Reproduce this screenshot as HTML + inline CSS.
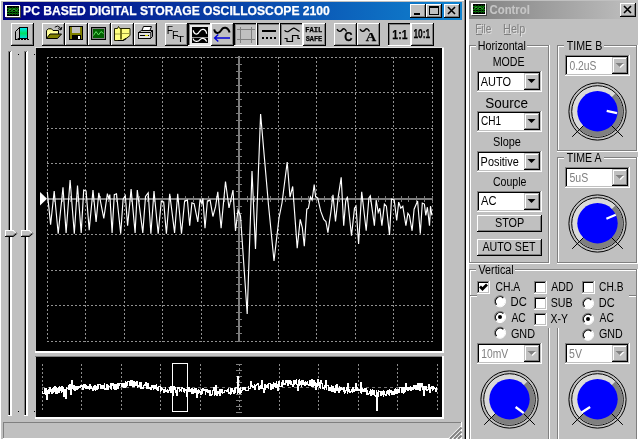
<!DOCTYPE html><html><head><meta charset="utf-8"><title>PC BASED DIGITAL STORAGE OSCILLOSCOPE 2100</title><style>html,body{margin:0;padding:0;background:#fff;overflow:hidden}body{width:638px;height:439px}svg rect{shape-rendering:crispEdges}</style></head><body><svg width="638" height="439" viewBox="0 0 638 439" style="display:block;will-change:transform" shape-rendering="auto"><rect x="0" y="0" width="638" height="439" fill="#fff" />
<rect x="0" y="0" width="466" height="439" fill="#c0c0c0" />
<rect x="0" y="0" width="1" height="439" fill="#fff" />
<rect x="0" y="0" width="466" height="1" fill="#fff" />
<rect x="464" y="0" width="1" height="439" fill="#808080" />
<rect x="465" y="0" width="1" height="439" fill="#000" />
<defs><linearGradient id="gA" x1="0" x2="1" y1="0" y2="0"><stop offset="0" stop-color="#000080"/><stop offset="1" stop-color="#1084d0"/></linearGradient><linearGradient id="gI" x1="0" x2="1" y1="0" y2="0"><stop offset="0" stop-color="#808080"/><stop offset="1" stop-color="#c0c0c0"/></linearGradient></defs>
<rect x="3" y="2" width="459" height="18" fill="url(#gA)" />
<rect x="5" y="5" width="15" height="12" fill="#fff" />
<rect x="6" y="17" width="15" height="1" fill="#404040" />
<rect x="20" y="6" width="1" height="12" fill="#404040" />
<rect x="7" y="6" width="12" height="10" fill="#000" />
<rect x="7" y="8" width="12" height="1" fill="#087808" />
<rect x="7" y="11" width="12" height="1" fill="#087808" />
<rect x="7" y="13" width="12" height="1" fill="#087808" />
<rect x="9" y="7" width="1" height="8" fill="#065006" />
<rect x="12" y="7" width="1" height="8" fill="#065006" />
<rect x="15" y="7" width="1" height="8" fill="#065006" />
<rect x="17" y="7" width="1" height="8" fill="#065006" />
<polyline points="8,10.5 10,9 12,10.5 14,9 16,10.5 18,9.5" fill="none" stroke="#30b030" stroke-width="1"/>
<text x="23.09" y="15.0" font-family="'Liberation Sans', sans-serif" font-size="12.5" font-weight="bold" fill="#fff" textLength="306.80" lengthAdjust="spacingAndGlyphs"  stroke="#fff" stroke-width="0.25">PC BASED DIGITAL STORAGE OSCILLOSCOPE 2100</text>
<rect x="410" y="4" width="16" height="14" fill="#c0c0c0" />
<rect x="410" y="4" width="16" height="1" fill="#fff" />
<rect x="410" y="4" width="1" height="14" fill="#fff" />
<rect x="410" y="17" width="16" height="1" fill="#000" />
<rect x="425" y="4" width="1" height="14" fill="#000" />
<rect x="411" y="16" width="14" height="1" fill="#808080" />
<rect x="424" y="5" width="1" height="12" fill="#808080" />
<rect x="414" y="13" width="6" height="2" fill="#000" />
<rect x="426" y="4" width="16" height="14" fill="#c0c0c0" />
<rect x="426" y="4" width="16" height="1" fill="#fff" />
<rect x="426" y="4" width="1" height="14" fill="#fff" />
<rect x="426" y="17" width="16" height="1" fill="#000" />
<rect x="441" y="4" width="1" height="14" fill="#000" />
<rect x="427" y="16" width="14" height="1" fill="#808080" />
<rect x="440" y="5" width="1" height="12" fill="#808080" />
<rect x="429.5" y="6.5" width="9" height="8" fill="none" stroke="#000" stroke-width="1"/>
<rect x="429" y="7" width="10" height="1" fill="#000" />
<rect x="444" y="4" width="16" height="14" fill="#c0c0c0" />
<rect x="444" y="4" width="16" height="1" fill="#fff" />
<rect x="444" y="4" width="1" height="14" fill="#fff" />
<rect x="444" y="17" width="16" height="1" fill="#000" />
<rect x="459" y="4" width="1" height="14" fill="#000" />
<rect x="445" y="16" width="14" height="1" fill="#808080" />
<rect x="458" y="5" width="1" height="12" fill="#808080" />
<path d="M448,7 L455,14 M455,7 L448,14" stroke="#000" stroke-width="1.6" fill="none"/>
<rect x="11" y="23" width="23" height="23" fill="#c0c0c0" />
<rect x="11" y="23" width="23" height="1" fill="#fff" />
<rect x="11" y="23" width="1" height="23" fill="#fff" />
<rect x="11" y="45" width="23" height="1" fill="#000" />
<rect x="33" y="23" width="1" height="23" fill="#000" />
<rect x="12" y="44" width="21" height="1" fill="#808080" />
<rect x="32" y="24" width="1" height="21" fill="#808080" />
<rect x="42" y="23" width="23" height="23" fill="#c0c0c0" />
<rect x="42" y="23" width="23" height="1" fill="#fff" />
<rect x="42" y="23" width="1" height="23" fill="#fff" />
<rect x="42" y="45" width="23" height="1" fill="#000" />
<rect x="64" y="23" width="1" height="23" fill="#000" />
<rect x="43" y="44" width="21" height="1" fill="#808080" />
<rect x="63" y="24" width="1" height="21" fill="#808080" />
<rect x="65" y="23" width="23" height="23" fill="#c0c0c0" />
<rect x="65" y="23" width="23" height="1" fill="#fff" />
<rect x="65" y="23" width="1" height="23" fill="#fff" />
<rect x="65" y="45" width="23" height="1" fill="#000" />
<rect x="87" y="23" width="1" height="23" fill="#000" />
<rect x="66" y="44" width="21" height="1" fill="#808080" />
<rect x="86" y="24" width="1" height="21" fill="#808080" />
<rect x="88" y="23" width="23" height="23" fill="#c0c0c0" />
<rect x="88" y="23" width="23" height="1" fill="#fff" />
<rect x="88" y="23" width="1" height="23" fill="#fff" />
<rect x="88" y="45" width="23" height="1" fill="#000" />
<rect x="110" y="23" width="1" height="23" fill="#000" />
<rect x="89" y="44" width="21" height="1" fill="#808080" />
<rect x="109" y="24" width="1" height="21" fill="#808080" />
<rect x="111" y="23" width="23" height="23" fill="#c0c0c0" />
<rect x="111" y="23" width="23" height="1" fill="#fff" />
<rect x="111" y="23" width="1" height="23" fill="#fff" />
<rect x="111" y="45" width="23" height="1" fill="#000" />
<rect x="133" y="23" width="1" height="23" fill="#000" />
<rect x="112" y="44" width="21" height="1" fill="#808080" />
<rect x="132" y="24" width="1" height="21" fill="#808080" />
<rect x="134" y="23" width="23" height="23" fill="#c0c0c0" />
<rect x="134" y="23" width="23" height="1" fill="#fff" />
<rect x="134" y="23" width="1" height="23" fill="#fff" />
<rect x="134" y="45" width="23" height="1" fill="#000" />
<rect x="156" y="23" width="1" height="23" fill="#000" />
<rect x="135" y="44" width="21" height="1" fill="#808080" />
<rect x="155" y="24" width="1" height="21" fill="#808080" />
<rect x="165" y="23" width="23" height="23" fill="#c0c0c0" />
<rect x="165" y="23" width="23" height="1" fill="#fff" />
<rect x="165" y="23" width="1" height="23" fill="#fff" />
<rect x="165" y="45" width="23" height="1" fill="#000" />
<rect x="187" y="23" width="1" height="23" fill="#000" />
<rect x="166" y="44" width="21" height="1" fill="#808080" />
<rect x="186" y="24" width="1" height="21" fill="#808080" />
<rect x="211" y="23" width="23" height="23" fill="#c0c0c0" />
<rect x="211" y="23" width="23" height="1" fill="#fff" />
<rect x="211" y="23" width="1" height="23" fill="#fff" />
<rect x="211" y="45" width="23" height="1" fill="#000" />
<rect x="233" y="23" width="1" height="23" fill="#000" />
<rect x="212" y="44" width="21" height="1" fill="#808080" />
<rect x="232" y="24" width="1" height="21" fill="#808080" />
<rect x="303" y="23" width="23" height="23" fill="#c0c0c0" />
<rect x="303" y="23" width="23" height="1" fill="#fff" />
<rect x="303" y="23" width="1" height="23" fill="#fff" />
<rect x="303" y="45" width="23" height="1" fill="#000" />
<rect x="325" y="23" width="1" height="23" fill="#000" />
<rect x="304" y="44" width="21" height="1" fill="#808080" />
<rect x="324" y="24" width="1" height="21" fill="#808080" />
<rect x="334" y="23" width="23" height="23" fill="#c0c0c0" />
<rect x="334" y="23" width="23" height="1" fill="#fff" />
<rect x="334" y="23" width="1" height="23" fill="#fff" />
<rect x="334" y="45" width="23" height="1" fill="#000" />
<rect x="356" y="23" width="1" height="23" fill="#000" />
<rect x="335" y="44" width="21" height="1" fill="#808080" />
<rect x="355" y="24" width="1" height="21" fill="#808080" />
<rect x="357" y="23" width="23" height="23" fill="#c0c0c0" />
<rect x="357" y="23" width="23" height="1" fill="#fff" />
<rect x="357" y="23" width="1" height="23" fill="#fff" />
<rect x="357" y="45" width="23" height="1" fill="#000" />
<rect x="379" y="23" width="1" height="23" fill="#000" />
<rect x="358" y="44" width="21" height="1" fill="#808080" />
<rect x="378" y="24" width="1" height="21" fill="#808080" />
<rect x="411" y="23" width="23" height="23" fill="#c0c0c0" />
<rect x="411" y="23" width="23" height="1" fill="#fff" />
<rect x="411" y="23" width="1" height="23" fill="#fff" />
<rect x="411" y="45" width="23" height="1" fill="#000" />
<rect x="433" y="23" width="1" height="23" fill="#000" />
<rect x="412" y="44" width="21" height="1" fill="#808080" />
<rect x="432" y="24" width="1" height="21" fill="#808080" />
<rect x="234" y="23" width="23" height="23" fill="#c0c0c0" />
<rect x="234" y="23" width="23" height="1" fill="#000" />
<rect x="234" y="23" width="1" height="23" fill="#000" />
<rect x="235" y="24" width="21" height="1" fill="#808080" />
<rect x="235" y="24" width="1" height="21" fill="#808080" />
<rect x="234" y="45" width="23" height="1" fill="#fff" />
<rect x="256" y="23" width="1" height="23" fill="#fff" />
<rect x="257" y="23" width="23" height="23" fill="#c0c0c0" />
<rect x="257" y="23" width="23" height="1" fill="#000" />
<rect x="257" y="23" width="1" height="23" fill="#000" />
<rect x="258" y="24" width="21" height="1" fill="#808080" />
<rect x="258" y="24" width="1" height="21" fill="#808080" />
<rect x="257" y="45" width="23" height="1" fill="#fff" />
<rect x="279" y="23" width="1" height="23" fill="#fff" />
<rect x="280" y="23" width="23" height="23" fill="#c0c0c0" />
<rect x="280" y="23" width="23" height="1" fill="#000" />
<rect x="280" y="23" width="1" height="23" fill="#000" />
<rect x="281" y="24" width="21" height="1" fill="#808080" />
<rect x="281" y="24" width="1" height="21" fill="#808080" />
<rect x="280" y="45" width="23" height="1" fill="#fff" />
<rect x="302" y="23" width="1" height="23" fill="#fff" />
<rect x="388" y="23" width="23" height="23" fill="#c0c0c0" />
<rect x="388" y="23" width="23" height="1" fill="#000" />
<rect x="388" y="23" width="1" height="23" fill="#000" />
<rect x="389" y="24" width="21" height="1" fill="#808080" />
<rect x="389" y="24" width="1" height="21" fill="#808080" />
<rect x="388" y="45" width="23" height="1" fill="#fff" />
<rect x="410" y="23" width="1" height="23" fill="#fff" />
<rect x="188" y="23" width="23" height="23" fill="#e9e9e9" />
<rect x="188" y="23" width="23" height="1" fill="#000" />
<rect x="188" y="23" width="1" height="23" fill="#000" />
<rect x="189" y="24" width="21" height="1" fill="#808080" />
<rect x="189" y="24" width="1" height="21" fill="#808080" />
<rect x="188" y="45" width="23" height="1" fill="#fff" />
<rect x="210" y="23" width="1" height="23" fill="#fff" />
<defs><linearGradient id="gD" x1="0" x2="0" y1="0" y2="1"><stop offset="0" stop-color="#00e8ff"/><stop offset=".55" stop-color="#00e060"/><stop offset="1" stop-color="#00d8d8"/></linearGradient></defs>
<rect x="19.5" y="27.5" width="8" height="10.5" fill="url(#gD)" stroke="#000" stroke-width="1"/>
<path d="M19.5,27.5 L15.5,31.5 L15.5,39.5" fill="none" stroke="#000" stroke-width="1"/>
<path d="M15,39.5 L30,39.5" fill="none" stroke="#000" stroke-width="1" stroke-dasharray="2,1"/>
<path d="M19.5,38 L17,39.5" fill="none" stroke="#000" stroke-width="1"/>
<path d="M46.5,38.5 L46.5,30.5 L48.5,28.8 L51.5,28.8 L53,30.5 L58.5,30.5 L58.5,34" fill="#ffff99" stroke="#000" stroke-width="1"/>
<path d="M46.5,38.5 L50,34 L61.5,34 L57.5,38.5 Z" fill="#808000" stroke="#000" stroke-width="1"/>
<path d="M54.8,27.2 Q57.5,24.8 60,27.5 L60.8,29.5" fill="none" stroke="#000" stroke-width="1"/>
<path d="M58.2,28.6 L61,30 L61.8,27" fill="none" stroke="#000" stroke-width="1"/>
<rect x="69.5" y="26.5" width="13" height="13" fill="#808000" stroke="#000" stroke-width="1"/>
<rect x="72" y="27" width="8" height="6" fill="#c0c0c0" />
<rect x="72" y="35" width="9" height="4" fill="#000" />
<rect x="78" y="36" width="2" height="3" fill="#fff" />
<rect x="91.5" y="27.5" width="14" height="12" fill="#808080" stroke="#000" stroke-width="1"/>
<rect x="93" y="29" width="11" height="9" fill="#006000" />
<polyline points="93.5,35.5 96,31.5 98.5,35 101,31.5 103.5,33.5" fill="none" stroke="#60e060" stroke-width="1"/>
<path d="M114.5,28.5 L117.5,28.5 L118.5,26.5 L119.8,28.5 L130,28.5 L130,35.5 L125.5,39 L123,40.5 L114.5,40.5 Z" fill="#ffff80" stroke="#202000" stroke-width="1"/>
<path d="M121,29 L121,39.5" fill="none" stroke="#505000" stroke-width="1.6"/>
<path d="M122,33.5 L129.5,33.5 M115,34 L120,34" fill="none" stroke="#a0a040" stroke-width="1"/>
<path d="M118,40.5 L123,40.5 L126,38.6" fill="none" stroke="#000" stroke-width="1.2"/>
<path d="M141.5,31.5 L143.5,26.5 L151.5,26.5 L149.5,31.5 Z" fill="#fff" stroke="#000" stroke-width="1"/>
<path d="M138.5,32.5 L141.5,30.5 L152.5,30.5 L150.5,32.5 Z" fill="#c0c0c0" stroke="#000" stroke-width="1"/>
<rect x="138.5" y="32.5" width="12" height="6" fill="#e0e0e0" stroke="#000" stroke-width="1"/>
<path d="M150.5,32.5 L152.5,30.5 L152.5,36.5 L150.5,38.5" fill="#909090" stroke="#000" stroke-width="1"/>
<rect x="140" y="35" width="9" height="1" fill="#000" />
<rect x="145" y="35" width="3" height="1" fill="#e0e000" />
<text x="166.86" y="33.7" font-family="'Liberation Sans', sans-serif" font-size="10.5" font-weight="normal" fill="#000" textLength="6.25" lengthAdjust="spacingAndGlyphs" >F</text>
<text x="171.93" y="38.8" font-family="'Liberation Sans', sans-serif" font-size="10.5" font-weight="normal" fill="#000" textLength="6.50" lengthAdjust="spacingAndGlyphs" >F</text>
<text x="177.04" y="42.0" font-family="'Liberation Sans', sans-serif" font-size="9.5" font-weight="normal" fill="#000" textLength="7.02" lengthAdjust="spacingAndGlyphs" >T</text>
<rect x="192" y="27" width="16" height="16" fill="#000" />
<rect x="192" y="37" width="16" height="1" fill="#909090" />
<path d="M193.3,30.3 C193.5,34.2 197.5,35.8 199.5,31.6 C201.3,28.2 206,28.4 206.6,33.8" fill="none" stroke="#fff" stroke-width="1.25"/>
<path d="M193,38.6 C194,42 198,42.3 200,39.6 C201.5,37.6 205,37.6 206.7,41.5" fill="none" stroke="#fff" stroke-width="1.25"/>
<path d="M214.2,29.3 C215,34 219,34 221,30.5 C223,26.5 228,26.5 229.6,32.5" fill="none" stroke="#000" stroke-width="2"/>
<path d="M214.8,38 L230,38 M218.3,34.6 L214.6,38 L218.3,41.4" fill="none" stroke="#0000d8" stroke-width="1.4"/>
<rect x="240" y="27" width="1" height="16" fill="#808080" />
<rect x="251" y="27" width="1" height="16" fill="#808080" />
<rect x="237" y="29" width="18" height="1" fill="#808080" />
<rect x="237" y="39" width="18" height="1" fill="#808080" />
<rect x="262" y="30" width="14" height="2" fill="#000" />
<rect x="262" y="37" width="2" height="2" fill="#000" />
<rect x="266" y="37" width="2" height="2" fill="#000" />
<rect x="270" y="37" width="2" height="2" fill="#000" />
<rect x="274" y="37" width="2" height="2" fill="#000" />
<path d="M284.5,30.4 Q286.8,32.6 288.8,31.2 L292.3,28.7 Q293.9,27.7 295.4,28.8 L299.6,31.6" fill="none" stroke="#000" stroke-width="1.2"/>
<path d="M284.5,38.5 L287,38.5 L287,41.5 L292.5,41.5 L292.5,35.5 L298,35.5 L298,38.5 L300,38.5" fill="none" stroke="#000" stroke-width="1.2"/>
<text x="305.22" y="32.2" font-family="'Liberation Mono', monospace" font-size="7.5" font-weight="bold" fill="#000" textLength="17.16" lengthAdjust="spacingAndGlyphs"  stroke="#000" stroke-width="0.25">FAIL</text>
<text x="305.67" y="41.0" font-family="'Liberation Mono', monospace" font-size="7.5" font-weight="bold" fill="#000" textLength="16.61" lengthAdjust="spacingAndGlyphs"  stroke="#000" stroke-width="0.25">SAFE</text>
<path d="M337,29.2 C338.5,32 340.5,32 342,30 C343.5,28 345,28.5 346.5,31.5" fill="none" stroke="#000" stroke-width="1.4"/>
<text x="344.23" y="41.3" font-family="'Liberation Sans', sans-serif" font-size="12.5" font-weight="bold" fill="#000" textLength="8.28" lengthAdjust="spacingAndGlyphs"  stroke="#000" stroke-width="0.25">C</text>
<path d="M360,29.2 C361.5,32 363.5,32 365,30 C366.5,28 368,28.5 369.5,31.5" fill="none" stroke="#000" stroke-width="1.4"/>
<text x="365.86" y="40.5" font-family="'Liberation Serif', serif" font-size="13.5" font-weight="bold" fill="#000" textLength="10.45" lengthAdjust="spacingAndGlyphs"  stroke="#000" stroke-width="0.25">A</text>
<text x="392.34" y="39.3" font-family="'Liberation Sans', sans-serif" font-size="13" font-weight="bold" fill="#000" textLength="15.15" lengthAdjust="spacingAndGlyphs"  stroke="#000" stroke-width="0.25">1:1</text>
<text x="413.47" y="38.4" font-family="'Liberation Sans', sans-serif" font-size="13" font-weight="bold" fill="#000" textLength="16.76" lengthAdjust="spacingAndGlyphs"  stroke="#000" stroke-width="0.25">10:1</text>
<rect x="8" y="51" width="1" height="364" fill="#808080" />
<rect x="9" y="51" width="1" height="364" fill="#000" />
<rect x="10" y="51" width="1" height="365" fill="#fff" />
<rect x="11" y="51" width="1" height="365" fill="#fff" />
<rect x="8" y="415" width="4" height="1" fill="#fff" />
<rect x="8" y="51" width="3" height="1" fill="#808080" />
<rect x="24" y="51" width="1" height="364" fill="#808080" />
<rect x="25" y="51" width="1" height="364" fill="#000" />
<rect x="26" y="51" width="1" height="365" fill="#fff" />
<rect x="27" y="51" width="1" height="365" fill="#fff" />
<rect x="24" y="415" width="4" height="1" fill="#fff" />
<rect x="24" y="51" width="3" height="1" fill="#808080" />
<rect x="18" y="54" width="1" height="1" fill="#000" />
<rect x="34" y="54" width="1" height="1" fill="#000" />
<rect x="18" y="411" width="1" height="1" fill="#000" />
<rect x="34" y="411" width="1" height="1" fill="#000" />
<path d="M5,230 L13,230 L17,233.5 L13,237 L5,237 Z" fill="#c0c0c0"/>
<rect x="5" y="230" width="9" height="1" fill="#fff" />
<rect x="5" y="230" width="1" height="7" fill="#fff" />
<path d="M5,236.5 L13,236.5 L17,233" fill="none" stroke="#000" stroke-width="1.2"/>
<path d="M13,230.5 L16.5,233.5" fill="none" stroke="#fff" stroke-width="1"/>
<path d="M6,235.5 L13,235.5 L15.5,233.3" fill="none" stroke="#808080" stroke-width="1"/>
<path d="M21,230 L29,230 L33,233.5 L29,237 L21,237 Z" fill="#c0c0c0"/>
<rect x="21" y="230" width="9" height="1" fill="#fff" />
<rect x="21" y="230" width="1" height="7" fill="#fff" />
<path d="M21,236.5 L29,236.5 L33,233" fill="none" stroke="#000" stroke-width="1.2"/>
<path d="M29,230.5 L32.5,233.5" fill="none" stroke="#fff" stroke-width="1"/>
<path d="M22,235.5 L29,235.5 L31.5,233.3" fill="none" stroke="#808080" stroke-width="1"/>
<rect x="36" y="48" width="406" height="303" fill="#000" />
<rect x="35" y="351" width="409" height="1" fill="#fff" />
<rect x="35" y="352" width="409" height="1" fill="#fff" />
<rect x="442" y="47" width="1" height="306" fill="#fff" />
<rect x="443" y="47" width="1" height="306" fill="#fff" />
<rect x="35" y="47" width="409" height="1" fill="#e0e0e0" />
<line x1="47.5" y1="57" x2="47.5" y2="342" stroke="#909090" stroke-width="1" stroke-dasharray="2,2" shape-rendering="crispEdges"/>
<line x1="85.5" y1="57" x2="85.5" y2="342" stroke="#909090" stroke-width="1" stroke-dasharray="2,2" shape-rendering="crispEdges"/>
<line x1="124.5" y1="57" x2="124.5" y2="342" stroke="#909090" stroke-width="1" stroke-dasharray="2,2" shape-rendering="crispEdges"/>
<line x1="162.5" y1="57" x2="162.5" y2="342" stroke="#909090" stroke-width="1" stroke-dasharray="2,2" shape-rendering="crispEdges"/>
<line x1="201.5" y1="57" x2="201.5" y2="342" stroke="#909090" stroke-width="1" stroke-dasharray="2,2" shape-rendering="crispEdges"/>
<line x1="278.5" y1="57" x2="278.5" y2="342" stroke="#909090" stroke-width="1" stroke-dasharray="2,2" shape-rendering="crispEdges"/>
<line x1="316.5" y1="57" x2="316.5" y2="342" stroke="#909090" stroke-width="1" stroke-dasharray="2,2" shape-rendering="crispEdges"/>
<line x1="355.5" y1="57" x2="355.5" y2="342" stroke="#909090" stroke-width="1" stroke-dasharray="2,2" shape-rendering="crispEdges"/>
<line x1="393.5" y1="57" x2="393.5" y2="342" stroke="#909090" stroke-width="1" stroke-dasharray="2,2" shape-rendering="crispEdges"/>
<line x1="432.5" y1="57" x2="432.5" y2="342" stroke="#909090" stroke-width="1" stroke-dasharray="2,2" shape-rendering="crispEdges"/>
<line x1="47" y1="57.5" x2="433" y2="57.5" stroke="#909090" stroke-width="1" stroke-dasharray="2,2" shape-rendering="crispEdges"/>
<line x1="47" y1="92.5" x2="433" y2="92.5" stroke="#909090" stroke-width="1" stroke-dasharray="2,2" shape-rendering="crispEdges"/>
<line x1="47" y1="128.5" x2="433" y2="128.5" stroke="#909090" stroke-width="1" stroke-dasharray="2,2" shape-rendering="crispEdges"/>
<line x1="47" y1="163.5" x2="433" y2="163.5" stroke="#909090" stroke-width="1" stroke-dasharray="2,2" shape-rendering="crispEdges"/>
<line x1="47" y1="234.5" x2="433" y2="234.5" stroke="#909090" stroke-width="1" stroke-dasharray="2,2" shape-rendering="crispEdges"/>
<line x1="47" y1="270.5" x2="433" y2="270.5" stroke="#909090" stroke-width="1" stroke-dasharray="2,2" shape-rendering="crispEdges"/>
<line x1="47" y1="305.5" x2="433" y2="305.5" stroke="#909090" stroke-width="1" stroke-dasharray="2,2" shape-rendering="crispEdges"/>
<line x1="47" y1="341.5" x2="433" y2="341.5" stroke="#909090" stroke-width="1" stroke-dasharray="2,2" shape-rendering="crispEdges"/>
<rect x="238" y="56" width="2" height="286" fill="#7c7c7c" />
<rect x="47" y="198" width="386" height="2" fill="#7c7c7c" />
<rect x="236" y="57" width="6" height="1" fill="#7c7c7c" />
<rect x="236" y="64" width="6" height="1" fill="#7c7c7c" />
<rect x="236" y="71" width="6" height="1" fill="#7c7c7c" />
<rect x="236" y="78" width="6" height="1" fill="#7c7c7c" />
<rect x="236" y="85" width="6" height="1" fill="#7c7c7c" />
<rect x="236" y="92" width="6" height="1" fill="#7c7c7c" />
<rect x="236" y="99" width="6" height="1" fill="#7c7c7c" />
<rect x="236" y="106" width="6" height="1" fill="#7c7c7c" />
<rect x="236" y="113" width="6" height="1" fill="#7c7c7c" />
<rect x="236" y="120" width="6" height="1" fill="#7c7c7c" />
<rect x="236" y="128" width="6" height="1" fill="#7c7c7c" />
<rect x="236" y="135" width="6" height="1" fill="#7c7c7c" />
<rect x="236" y="142" width="6" height="1" fill="#7c7c7c" />
<rect x="236" y="149" width="6" height="1" fill="#7c7c7c" />
<rect x="236" y="156" width="6" height="1" fill="#7c7c7c" />
<rect x="236" y="163" width="6" height="1" fill="#7c7c7c" />
<rect x="236" y="170" width="6" height="1" fill="#7c7c7c" />
<rect x="236" y="177" width="6" height="1" fill="#7c7c7c" />
<rect x="236" y="184" width="6" height="1" fill="#7c7c7c" />
<rect x="236" y="191" width="6" height="1" fill="#7c7c7c" />
<rect x="236" y="199" width="6" height="1" fill="#7c7c7c" />
<rect x="236" y="206" width="6" height="1" fill="#7c7c7c" />
<rect x="236" y="213" width="6" height="1" fill="#7c7c7c" />
<rect x="236" y="220" width="6" height="1" fill="#7c7c7c" />
<rect x="236" y="227" width="6" height="1" fill="#7c7c7c" />
<rect x="236" y="234" width="6" height="1" fill="#7c7c7c" />
<rect x="236" y="241" width="6" height="1" fill="#7c7c7c" />
<rect x="236" y="248" width="6" height="1" fill="#7c7c7c" />
<rect x="236" y="255" width="6" height="1" fill="#7c7c7c" />
<rect x="236" y="262" width="6" height="1" fill="#7c7c7c" />
<rect x="236" y="270" width="6" height="1" fill="#7c7c7c" />
<rect x="236" y="277" width="6" height="1" fill="#7c7c7c" />
<rect x="236" y="284" width="6" height="1" fill="#7c7c7c" />
<rect x="236" y="291" width="6" height="1" fill="#7c7c7c" />
<rect x="236" y="298" width="6" height="1" fill="#7c7c7c" />
<rect x="236" y="305" width="6" height="1" fill="#7c7c7c" />
<rect x="236" y="312" width="6" height="1" fill="#7c7c7c" />
<rect x="236" y="319" width="6" height="1" fill="#7c7c7c" />
<rect x="236" y="326" width="6" height="1" fill="#7c7c7c" />
<rect x="236" y="333" width="6" height="1" fill="#7c7c7c" />
<rect x="236" y="341" width="6" height="1" fill="#7c7c7c" />
<rect x="47" y="196" width="1" height="6" fill="#7c7c7c" />
<rect x="54" y="196" width="1" height="6" fill="#7c7c7c" />
<rect x="62" y="196" width="1" height="6" fill="#7c7c7c" />
<rect x="70" y="196" width="1" height="6" fill="#7c7c7c" />
<rect x="77" y="196" width="1" height="6" fill="#7c7c7c" />
<rect x="85" y="196" width="1" height="6" fill="#7c7c7c" />
<rect x="93" y="196" width="1" height="6" fill="#7c7c7c" />
<rect x="100" y="196" width="1" height="6" fill="#7c7c7c" />
<rect x="108" y="196" width="1" height="6" fill="#7c7c7c" />
<rect x="116" y="196" width="1" height="6" fill="#7c7c7c" />
<rect x="124" y="196" width="1" height="6" fill="#7c7c7c" />
<rect x="131" y="196" width="1" height="6" fill="#7c7c7c" />
<rect x="139" y="196" width="1" height="6" fill="#7c7c7c" />
<rect x="147" y="196" width="1" height="6" fill="#7c7c7c" />
<rect x="154" y="196" width="1" height="6" fill="#7c7c7c" />
<rect x="162" y="196" width="1" height="6" fill="#7c7c7c" />
<rect x="170" y="196" width="1" height="6" fill="#7c7c7c" />
<rect x="177" y="196" width="1" height="6" fill="#7c7c7c" />
<rect x="185" y="196" width="1" height="6" fill="#7c7c7c" />
<rect x="193" y="196" width="1" height="6" fill="#7c7c7c" />
<rect x="201" y="196" width="1" height="6" fill="#7c7c7c" />
<rect x="208" y="196" width="1" height="6" fill="#7c7c7c" />
<rect x="216" y="196" width="1" height="6" fill="#7c7c7c" />
<rect x="224" y="196" width="1" height="6" fill="#7c7c7c" />
<rect x="231" y="196" width="1" height="6" fill="#7c7c7c" />
<rect x="239" y="196" width="1" height="6" fill="#7c7c7c" />
<rect x="247" y="196" width="1" height="6" fill="#7c7c7c" />
<rect x="254" y="196" width="1" height="6" fill="#7c7c7c" />
<rect x="262" y="196" width="1" height="6" fill="#7c7c7c" />
<rect x="270" y="196" width="1" height="6" fill="#7c7c7c" />
<rect x="278" y="196" width="1" height="6" fill="#7c7c7c" />
<rect x="285" y="196" width="1" height="6" fill="#7c7c7c" />
<rect x="293" y="196" width="1" height="6" fill="#7c7c7c" />
<rect x="301" y="196" width="1" height="6" fill="#7c7c7c" />
<rect x="308" y="196" width="1" height="6" fill="#7c7c7c" />
<rect x="316" y="196" width="1" height="6" fill="#7c7c7c" />
<rect x="324" y="196" width="1" height="6" fill="#7c7c7c" />
<rect x="331" y="196" width="1" height="6" fill="#7c7c7c" />
<rect x="339" y="196" width="1" height="6" fill="#7c7c7c" />
<rect x="347" y="196" width="1" height="6" fill="#7c7c7c" />
<rect x="355" y="196" width="1" height="6" fill="#7c7c7c" />
<rect x="362" y="196" width="1" height="6" fill="#7c7c7c" />
<rect x="370" y="196" width="1" height="6" fill="#7c7c7c" />
<rect x="378" y="196" width="1" height="6" fill="#7c7c7c" />
<rect x="385" y="196" width="1" height="6" fill="#7c7c7c" />
<rect x="393" y="196" width="1" height="6" fill="#7c7c7c" />
<rect x="401" y="196" width="1" height="6" fill="#7c7c7c" />
<rect x="408" y="196" width="1" height="6" fill="#7c7c7c" />
<rect x="416" y="196" width="1" height="6" fill="#7c7c7c" />
<rect x="424" y="196" width="1" height="6" fill="#7c7c7c" />
<rect x="432" y="196" width="1" height="6" fill="#7c7c7c" />
<polygon points="40,192 47,198.7 40,205.4" fill="#fff"/>
<polyline points="47.3,191.9 50.6,224.7 54.2,191.0 58.2,233.8 63.0,187.3 66.1,232.9 70.1,180.0 74.3,233.8 77.5,185.5 81.2,232.9 83.7,190.1 86.1,191.0 89.2,230.1 93.0,190.1 96.1,221.9 98.8,192.8 103.8,218.3 107.4,193.7 108.9,199.2 109.8,194.6 112.1,232.9 114.3,194.6 116.5,193.7 120.7,233.8 123.1,199.2 125.3,195.5 127.6,225.6 131.1,189.1 135.1,232.9 137.3,190.1 142.8,232.9 145.5,196.4 148.2,192.8 150.9,233.8 154.0,191.0 158.2,233.8 161.3,201.0 163.7,201.9 166.4,233.8 169.7,193.7 174.6,232.9 177.7,193.7 181.5,233.8 184.6,201.0 187.4,200.1 189.7,225.6 191.9,202.8 194.1,203.7 197.8,221.9 200.1,199.2 201.9,203.7 202.9,198.3 205.0,228.3 207.4,201.0 210.1,200.1 212.9,216.5 215.6,206.4 217.8,191.9 221.1,228.3 225.5,181.5 229.0,208.0 233.0,190.0 235.5,231.0 238.0,210.0 240.5,216.0 247.2,314.0 252.0,171.0 255.5,249.0 260.6,114.0 268.5,205.0 274.0,261.0 279.0,218.0 282.0,203.0 287.2,162.0 290.0,197.0 292.7,186.5 297.2,248.1 300.2,219.4 302.3,227.6 304.3,246.1 306.8,209.2 308.4,208.2 310.5,196.9 312.1,200.0 314.2,184.6 315.6,196.9 317.7,197.9 320.7,211.2 323.8,219.4 325.9,221.5 327.9,232.7 331.0,211.2 333.0,194.8 335.5,221.5 338.2,196.9 341.2,177.4 343.7,225.6 345.7,201.0 347.4,196.9 351.5,235.8 354.5,208.2 356.0,206.1 358.6,244.0 361.7,191.8 366.2,230.7 368.9,197.9 370.3,195.9 374.4,225.6 376.2,200.0 378.2,212.3 379.8,208.2 381.9,225.6 384.4,204.1 386.4,206.2 389.5,234.9 391.5,199.0 394.2,200.0 396.7,220.5 398.7,202.1 400.8,208.2 402.8,206.2 405.9,225.6 407.9,213.3 409.4,215.4 412.1,230.8 414.1,209.2 417.6,201.0 420.3,233.8 422.3,203.1 424.4,204.1 425.8,215.4 427.4,207.2 429.5,225.6 430.5,206.2 431.9,215.4" fill="none" stroke="#fff" stroke-width="1.15" stroke-linejoin="miter"/>
<rect x="36" y="357" width="406" height="60" fill="#000" />
<rect x="35" y="356" width="409" height="1" fill="#808080" />
<rect x="35" y="417" width="409" height="1" fill="#fff" />
<rect x="35" y="418" width="409" height="1" fill="#fff" />
<rect x="442" y="356" width="1" height="63" fill="#fff" />
<rect x="443" y="356" width="1" height="63" fill="#fff" />
<line x1="42.5" y1="364" x2="42.5" y2="412" stroke="#8c8c8c" stroke-width="1" stroke-dasharray="2,2" shape-rendering="crispEdges"/>
<line x1="81.5" y1="364" x2="81.5" y2="412" stroke="#8c8c8c" stroke-width="1" stroke-dasharray="2,2" shape-rendering="crispEdges"/>
<line x1="121.5" y1="364" x2="121.5" y2="412" stroke="#8c8c8c" stroke-width="1" stroke-dasharray="2,2" shape-rendering="crispEdges"/>
<line x1="160.5" y1="364" x2="160.5" y2="412" stroke="#8c8c8c" stroke-width="1" stroke-dasharray="2,2" shape-rendering="crispEdges"/>
<line x1="200.5" y1="364" x2="200.5" y2="412" stroke="#8c8c8c" stroke-width="1" stroke-dasharray="2,2" shape-rendering="crispEdges"/>
<line x1="239.5" y1="364" x2="239.5" y2="412" stroke="#8c8c8c" stroke-width="1" stroke-dasharray="2,2" shape-rendering="crispEdges"/>
<line x1="279.5" y1="364" x2="279.5" y2="412" stroke="#8c8c8c" stroke-width="1" stroke-dasharray="2,2" shape-rendering="crispEdges"/>
<line x1="318.5" y1="364" x2="318.5" y2="412" stroke="#8c8c8c" stroke-width="1" stroke-dasharray="2,2" shape-rendering="crispEdges"/>
<line x1="358.5" y1="364" x2="358.5" y2="412" stroke="#8c8c8c" stroke-width="1" stroke-dasharray="2,2" shape-rendering="crispEdges"/>
<line x1="397.5" y1="364" x2="397.5" y2="412" stroke="#8c8c8c" stroke-width="1" stroke-dasharray="2,2" shape-rendering="crispEdges"/>
<line x1="437.5" y1="364" x2="437.5" y2="412" stroke="#8c8c8c" stroke-width="1" stroke-dasharray="2,2" shape-rendering="crispEdges"/>
<rect x="236" y="364" width="6" height="1" fill="#808080" />
<rect x="236" y="370" width="6" height="1" fill="#808080" />
<rect x="236" y="376" width="6" height="1" fill="#808080" />
<rect x="236" y="382" width="6" height="1" fill="#808080" />
<rect x="236" y="388" width="6" height="1" fill="#808080" />
<rect x="236" y="394" width="6" height="1" fill="#808080" />
<rect x="236" y="400" width="6" height="1" fill="#808080" />
<rect x="236" y="406" width="6" height="1" fill="#808080" />
<rect x="236" y="412" width="6" height="1" fill="#808080" />
<line x1="42" y1="387.5" x2="437" y2="387.5" stroke="#707070" stroke-width="1" stroke-dasharray="3,3" shape-rendering="crispEdges"/>
<path d="M42,391h1v3h-1zM43,393h1v1h-1zM44,388h1v6h-1zM45,388h1v7h-1zM46,388h1v12h-1zM47,390h1v10h-1zM48,389h1v5h-1zM49,387h1v7h-1zM50,387h1v5h-1zM51,389h1v5h-1zM52,388h1v6h-1zM53,387h1v6h-1zM54,386h1v6h-1zM55,386h1v8h-1zM56,387h1v7h-1zM57,388h1v6h-1zM58,387h1v6h-1zM59,386h1v7h-1zM60,387h1v4h-1zM61,386h1v7h-1zM62,386h1v6h-1zM63,387h1v10h-1zM64,389h1v8h-1zM65,389h1v10h-1zM66,387h1v12h-1zM67,388h1v1h-1zM68,385h1v5h-1zM69,384h1v6h-1zM70,384h1v11h-1zM71,380h1v15h-1zM72,380h1v9h-1zM73,385h1v5h-1zM74,385h1v6h-1zM75,386h1v5h-1zM76,386h1v4h-1zM77,386h1v4h-1zM78,386h1v3h-1zM79,386h1v2h-1zM80,385h1v3h-1zM81,385h1v2h-1zM82,385h1v5h-1zM83,384h1v6h-1zM84,384h1v4h-1zM85,384h1v5h-1zM86,385h1v4h-1zM87,386h1v3h-1zM88,386h1v3h-1zM89,384h1v6h-1zM90,384h1v5h-1zM91,386h1v3h-1zM92,388h1v3h-1zM93,386h1v5h-1zM94,385h1v5h-1zM95,385h1v6h-1zM96,386h1v4h-1zM97,384h1v6h-1zM98,384h1v5h-1zM99,384h1v1h-1zM100,384h1v5h-1zM101,385h1v4h-1zM102,385h1v4h-1zM103,385h1v4h-1zM104,383h1v7h-1zM105,388h1v2h-1zM106,384h1v6h-1zM107,384h1v6h-1zM108,385h1v5h-1zM109,386h1v1h-1zM110,383h1v6h-1zM111,383h1v7h-1zM112,383h1v3h-1zM113,383h1v6h-1zM114,384h1v6h-1zM115,384h1v6h-1zM116,384h1v6h-1zM117,383h1v6h-1zM118,383h1v6h-1zM119,383h1v3h-1zM120,383h1v1h-1zM121,383h1v4h-1zM122,383h1v4h-1zM123,383h1v5h-1zM124,383h1v5h-1zM125,381h1v7h-1zM126,382h1v5h-1zM127,381h1v5h-1zM128,381h1v1h-1zM129,381h1v5h-1zM130,380h1v6h-1zM131,380h1v6h-1zM132,380h1v7h-1zM133,381h1v6h-1zM134,381h1v6h-1zM135,382h1v4h-1zM136,381h1v5h-1zM137,381h1v7h-1zM138,385h1v2h-1zM139,382h1v5h-1zM140,382h1v7h-1zM141,382h1v7h-1zM142,387h1v2h-1zM143,385h1v4h-1zM144,384h1v2h-1zM145,382h1v4h-1zM146,382h1v7h-1zM147,383h1v6h-1zM148,383h1v6h-1zM149,387h1v2h-1zM150,387h1v3h-1zM151,385h1v5h-1zM152,385h1v3h-1zM153,385h1v5h-1zM154,385h1v4h-1zM155,385h1v4h-1zM156,384h1v6h-1zM157,387h1v4h-1zM158,386h1v5h-1zM159,386h1v1h-1zM160,386h1v6h-1zM161,387h1v4h-1zM162,388h1v2h-1zM163,389h1v4h-1zM164,389h1v4h-1zM165,387h1v5h-1zM166,390h1v2h-1zM167,389h1v4h-1zM168,390h1v3h-1zM169,387h1v4h-1zM170,386h1v7h-1zM171,386h1v7h-1zM172,388h1v8h-1zM173,386h1v10h-1zM174,386h1v4h-1zM175,387h1v6h-1zM176,390h1v6h-1zM177,387h1v9h-1zM178,387h1v2h-1zM179,387h1v5h-1zM180,389h1v2h-1zM181,387h1v5h-1zM182,387h1v2h-1zM183,388h1v4h-1zM184,388h1v5h-1zM185,389h1v2h-1zM186,389h1v8h-1zM187,391h1v6h-1zM188,387h1v5h-1zM189,387h1v5h-1zM190,389h1v3h-1zM191,388h1v6h-1zM192,388h1v6h-1zM193,389h1v5h-1zM194,388h1v5h-1zM195,388h1v5h-1zM196,388h1v10h-1zM197,390h1v8h-1zM198,389h1v5h-1zM199,390h1v3h-1zM200,391h1v4h-1zM201,389h1v6h-1zM202,388h1v6h-1zM203,388h1v3h-1zM204,389h1v2h-1zM205,389h1v6h-1zM206,389h1v3h-1zM207,389h1v4h-1zM208,390h1v3h-1zM209,390h1v6h-1zM210,390h1v6h-1zM211,394h1v2h-1zM212,390h1v5h-1zM213,387h1v4h-1zM214,387h1v9h-1zM215,385h1v10h-1zM216,385h1v11h-1zM217,391h1v5h-1zM218,391h1v3h-1zM219,389h1v7h-1zM220,389h1v7h-1zM221,389h1v4h-1zM222,389h1v5h-1zM223,392h1v1h-1zM224,390h1v3h-1zM225,390h1v1h-1zM226,390h1v2h-1zM227,389h1v3h-1zM228,388h1v6h-1zM229,392h1v2h-1zM230,388h1v7h-1zM231,388h1v6h-1zM232,388h1v4h-1zM233,390h1v4h-1zM234,388h1v6h-1zM235,387h1v6h-1zM236,387h1v1h-1zM237,376h1v18h-1zM238,376h1v17h-1zM239,388h1v6h-1zM240,387h1v7h-1zM241,390h1v3h-1zM242,387h1v4h-1zM243,387h1v3h-1zM244,387h1v3h-1zM245,387h1v4h-1zM246,390h1v1h-1zM247,390h1v1h-1zM248,386h1v5h-1zM249,388h1v1h-1zM250,381h1v8h-1zM251,381h1v6h-1zM252,385h1v3h-1zM253,386h1v2h-1zM254,384h1v6h-1zM255,385h1v5h-1zM256,384h1v2h-1zM257,383h1v2h-1zM258,383h1v7h-1zM259,386h1v4h-1zM260,385h1v4h-1zM261,380h1v9h-1zM262,380h1v9h-1zM263,388h1v5h-1zM264,384h1v9h-1zM265,384h1v6h-1zM266,385h1v3h-1zM267,384h1v4h-1zM268,383h1v6h-1zM269,383h1v1h-1zM270,383h1v7h-1zM271,384h1v6h-1zM272,384h1v5h-1zM273,382h1v7h-1zM274,383h1v4h-1zM275,383h1v5h-1zM276,381h1v7h-1zM277,384h1v7h-1zM278,381h1v10h-1zM279,381h1v6h-1zM280,386h1v1h-1zM281,382h1v5h-1zM282,380h1v7h-1zM283,380h1v5h-1zM284,383h1v2h-1zM285,380h1v5h-1zM286,380h1v3h-1zM287,380h1v6h-1zM288,380h1v6h-1zM289,380h1v4h-1zM290,380h1v5h-1zM291,381h1v4h-1zM292,384h1v3h-1zM293,380h1v7h-1zM294,380h1v5h-1zM295,380h1v4h-1zM296,379h1v6h-1zM297,384h1v7h-1zM298,380h1v11h-1zM299,379h1v7h-1zM300,381h1v4h-1zM301,380h1v7h-1zM302,380h1v5h-1zM303,380h1v5h-1zM304,382h1v4h-1zM305,381h1v5h-1zM306,382h1v3h-1zM307,381h1v4h-1zM308,384h1v2h-1zM309,380h1v6h-1zM310,380h1v6h-1zM311,379h1v8h-1zM312,379h1v8h-1zM313,380h1v7h-1zM314,380h1v6h-1zM315,382h1v8h-1zM316,383h1v7h-1zM317,379h1v8h-1zM318,379h1v7h-1zM319,382h1v6h-1zM320,380h1v9h-1zM321,380h1v4h-1zM322,383h1v6h-1zM323,387h1v2h-1zM324,385h1v5h-1zM325,380h1v8h-1zM326,380h1v10h-1zM327,385h1v1h-1zM328,385h1v6h-1zM329,387h1v4h-1zM330,387h1v4h-1zM331,385h1v7h-1zM332,386h1v6h-1zM333,386h1v6h-1zM334,388h1v5h-1zM335,385h1v8h-1zM336,384h1v7h-1zM337,384h1v7h-1zM338,388h1v5h-1zM339,386h1v7h-1zM340,387h1v4h-1zM341,387h1v3h-1zM342,388h1v2h-1zM343,387h1v5h-1zM344,387h1v7h-1zM345,390h1v3h-1zM346,387h1v4h-1zM347,383h1v11h-1zM348,383h1v9h-1zM349,389h1v4h-1zM350,391h1v2h-1zM351,389h1v3h-1zM352,387h1v6h-1zM353,387h1v5h-1zM354,389h1v3h-1zM355,383h1v8h-1zM356,383h1v8h-1zM357,387h1v4h-1zM358,389h1v2h-1zM359,389h1v2h-1zM360,382h1v11h-1zM361,382h1v12h-1zM362,388h1v4h-1zM363,389h1v3h-1zM364,388h1v4h-1zM365,388h1v4h-1zM366,388h1v7h-1zM367,390h1v5h-1zM368,393h1v2h-1zM369,391h1v3h-1zM370,389h1v7h-1zM371,390h1v6h-1zM372,389h1v6h-1zM373,390h1v5h-1zM374,390h1v6h-1zM375,395h1v2h-1zM376,390h1v21h-1zM377,392h1v19h-1zM378,390h1v7h-1zM379,391h1v1h-1zM380,391h1v5h-1zM381,391h1v5h-1zM382,391h1v4h-1zM383,390h1v7h-1zM384,391h1v4h-1zM385,394h1v2h-1zM386,391h1v5h-1zM387,390h1v4h-1zM388,390h1v5h-1zM389,389h1v7h-1zM390,390h1v3h-1zM391,390h1v5h-1zM392,391h1v4h-1zM393,391h1v4h-1zM394,389h1v6h-1zM395,388h1v6h-1zM396,389h1v5h-1zM397,389h1v5h-1zM398,389h1v4h-1zM399,387h1v6h-1zM400,387h1v1h-1zM401,387h1v6h-1zM402,387h1v6h-1zM403,387h1v7h-1zM404,387h1v6h-1zM405,383h1v9h-1zM406,383h1v7h-1zM407,387h1v4h-1zM408,387h1v4h-1zM409,387h1v3h-1zM410,386h1v5h-1zM411,387h1v4h-1zM412,387h1v3h-1zM413,385h1v5h-1zM414,385h1v4h-1zM415,385h1v5h-1zM416,385h1v5h-1zM417,383h1v7h-1zM418,383h1v7h-1zM419,383h1v8h-1zM420,383h1v8h-1zM421,383h1v4h-1zM422,383h1v7h-1zM423,386h1v10h-1zM424,386h1v10h-1zM425,386h1v4h-1zM426,386h1v5h-1zM427,389h1v2h-1zM428,384h1v6h-1zM429,384h1v9h-1zM430,387h1v6h-1zM431,386h1v3h-1zM432,386h1v5h-1zM433,386h1v4h-1zM434,387h1v2h-1zM435,388h1v4h-1zM436,387h1v5h-1z" fill="#fff" shape-rendering="crispEdges"/>
<rect x="172.5" y="363.5" width="15" height="48" fill="none" stroke="#fff" stroke-width="1"/>
<rect x="3" y="422" width="459" height="1" fill="#808080" />
<rect x="3" y="422" width="1" height="17" fill="#808080" />
<rect x="461" y="422" width="1" height="17" fill="#fff" />
<rect x="3" y="438" width="459" height="1" fill="#fff" />
<path d="M448.5,439 L461.5,426" stroke="#fff" stroke-width="1.3"/>
<path d="M450,439 L461.5,427.5" stroke="#808080" stroke-width="1.9"/>
<path d="M452.5,439 L461.5,430" stroke="#fff" stroke-width="1.3"/>
<path d="M454,439 L461.5,431.5" stroke="#808080" stroke-width="1.9"/>
<path d="M456.5,439 L461.5,434" stroke="#fff" stroke-width="1.3"/>
<path d="M458,439 L461.5,435.5" stroke="#808080" stroke-width="1.9"/>
<rect x="469" y="0" width="169" height="439" fill="#c0c0c0" />
<rect x="469" y="1" width="169" height="18" fill="url(#gI)" />
<rect x="471" y="3" width="15" height="12" fill="#fff" />
<rect x="472" y="15" width="15" height="1" fill="#404040" />
<rect x="486" y="4" width="1" height="12" fill="#404040" />
<rect x="473" y="4" width="12" height="10" fill="#000" />
<rect x="473" y="6" width="12" height="1" fill="#087808" />
<rect x="473" y="9" width="12" height="1" fill="#087808" />
<rect x="473" y="11" width="12" height="1" fill="#087808" />
<rect x="475" y="5" width="1" height="8" fill="#065006" />
<rect x="478" y="5" width="1" height="8" fill="#065006" />
<rect x="481" y="5" width="1" height="8" fill="#065006" />
<rect x="483" y="5" width="1" height="8" fill="#065006" />
<polyline points="474,8.5 476,7 478,8.5 480,7 482,8.5 484,7.5" fill="none" stroke="#30b030" stroke-width="1"/>
<text x="489.54" y="13.9" font-family="'Liberation Sans', sans-serif" font-size="12.3" font-weight="bold" fill="#c6c6c6" textLength="40.27" lengthAdjust="spacingAndGlyphs"  stroke="#c6c6c6" stroke-width="0.1">Control</text>
<rect x="620" y="3" width="16" height="14" fill="#c0c0c0" />
<rect x="620" y="3" width="16" height="1" fill="#fff" />
<rect x="620" y="3" width="1" height="14" fill="#fff" />
<rect x="620" y="16" width="16" height="1" fill="#000" />
<rect x="635" y="3" width="1" height="14" fill="#000" />
<rect x="621" y="15" width="14" height="1" fill="#808080" />
<rect x="634" y="4" width="1" height="12" fill="#808080" />
<path d="M624,6 L631,13 M631,6 L624,13" stroke="#000" stroke-width="1.6" fill="none"/>
<text x="476.17" y="33.7" font-family="'Liberation Sans', sans-serif" font-size="12" font-weight="normal" fill="#fff" textLength="16.28" lengthAdjust="spacingAndGlyphs" opacity="0.5">File</text>
<text x="475.17" y="32.7" font-family="'Liberation Sans', sans-serif" font-size="12" font-weight="normal" fill="#808080" textLength="16.28" lengthAdjust="spacingAndGlyphs" >File</text>
<text x="504.12" y="33.7" font-family="'Liberation Sans', sans-serif" font-size="12" font-weight="normal" fill="#fff" textLength="22.13" lengthAdjust="spacingAndGlyphs" opacity="0.5">Help</text>
<text x="503.12" y="32.7" font-family="'Liberation Sans', sans-serif" font-size="12" font-weight="normal" fill="#808080" textLength="22.13" lengthAdjust="spacingAndGlyphs" >Help</text>
<rect x="476" y="34" width="6" height="1" fill="#808080" />
<rect x="504" y="34" width="7" height="1" fill="#808080" />
<rect x="469" y="45" width="7" height="1" fill="#808080" />
<rect x="470" y="46" width="6" height="1" fill="#fff" />
<rect x="527" y="45" width="22" height="1" fill="#808080" />
<rect x="527" y="46" width="21" height="1" fill="#fff" />
<rect x="469" y="45" width="1" height="218" fill="#808080" />
<rect x="470" y="46" width="1" height="216" fill="#fff" />
<rect x="469" y="262" width="80" height="1" fill="#808080" />
<rect x="469" y="263" width="81" height="1" fill="#fff" />
<rect x="548" y="45" width="1" height="218" fill="#808080" />
<rect x="549" y="45" width="1" height="219" fill="#fff" />
<text x="477.82" y="49.7" font-family="'Liberation Sans', sans-serif" font-size="12.5" font-weight="normal" fill="#000" textLength="48.09" lengthAdjust="spacingAndGlyphs" >Horizontal</text>
<rect x="557" y="45" width="7" height="1" fill="#808080" />
<rect x="558" y="46" width="6" height="1" fill="#fff" />
<rect x="604" y="45" width="33" height="1" fill="#808080" />
<rect x="604" y="46" width="32" height="1" fill="#fff" />
<rect x="557" y="45" width="1" height="106" fill="#808080" />
<rect x="558" y="46" width="1" height="104" fill="#fff" />
<rect x="557" y="150" width="80" height="1" fill="#808080" />
<rect x="557" y="151" width="81" height="1" fill="#fff" />
<rect x="636" y="45" width="1" height="106" fill="#808080" />
<rect x="637" y="45" width="1" height="107" fill="#fff" />
<text x="566.76" y="49.7" font-family="'Liberation Sans', sans-serif" font-size="12.5" font-weight="normal" fill="#000" textLength="35.50" lengthAdjust="spacingAndGlyphs" >TIME B</text>
<rect x="557" y="157" width="7" height="1" fill="#808080" />
<rect x="558" y="158" width="6" height="1" fill="#fff" />
<rect x="604" y="157" width="33" height="1" fill="#808080" />
<rect x="604" y="158" width="32" height="1" fill="#fff" />
<rect x="557" y="157" width="1" height="106" fill="#808080" />
<rect x="558" y="158" width="1" height="104" fill="#fff" />
<rect x="557" y="262" width="80" height="1" fill="#808080" />
<rect x="557" y="263" width="81" height="1" fill="#fff" />
<rect x="636" y="157" width="1" height="106" fill="#808080" />
<rect x="637" y="157" width="1" height="107" fill="#fff" />
<text x="566.77" y="162.0" font-family="'Liberation Sans', sans-serif" font-size="12.5" font-weight="normal" fill="#000" textLength="34.75" lengthAdjust="spacingAndGlyphs" >TIME A</text>
<rect x="469" y="269" width="7" height="1" fill="#808080" />
<rect x="470" y="270" width="6" height="1" fill="#fff" />
<rect x="515" y="269" width="122" height="1" fill="#808080" />
<rect x="515" y="270" width="121" height="1" fill="#fff" />
<rect x="469" y="269" width="1" height="177" fill="#808080" />
<rect x="470" y="270" width="1" height="175" fill="#fff" />
<rect x="469" y="445" width="168" height="1" fill="#808080" />
<rect x="469" y="446" width="169" height="1" fill="#fff" />
<rect x="636" y="269" width="1" height="177" fill="#808080" />
<rect x="637" y="269" width="1" height="178" fill="#fff" />
<text x="478.55" y="274.0" font-family="'Liberation Sans', sans-serif" font-size="12.5" font-weight="normal" fill="#000" textLength="35.15" lengthAdjust="spacingAndGlyphs" >Vertical</text>
<text x="492.63" y="65.7" font-family="'Liberation Sans', sans-serif" font-size="12.5" font-weight="normal" fill="#000" textLength="31.83" lengthAdjust="spacingAndGlyphs" >MODE</text>
<rect x="477" y="71" width="65" height="21" fill="#fff" />
<rect x="477" y="71" width="65" height="1" fill="#808080" />
<rect x="477" y="71" width="1" height="21" fill="#808080" />
<rect x="478" y="72" width="63" height="1" fill="#000" />
<rect x="478" y="72" width="1" height="19" fill="#000" />
<rect x="477" y="91" width="65" height="1" fill="#fff" />
<rect x="541" y="71" width="1" height="21" fill="#fff" />
<rect x="478" y="90" width="63" height="1" fill="#c0c0c0" />
<rect x="540" y="72" width="1" height="19" fill="#c0c0c0" />
<rect x="524" y="73" width="16" height="17" fill="#c0c0c0" />
<rect x="524" y="73" width="16" height="1" fill="#c0c0c0" />
<rect x="524" y="73" width="1" height="17" fill="#c0c0c0" />
<rect x="525" y="74" width="14" height="1" fill="#fff" />
<rect x="525" y="74" width="1" height="15" fill="#fff" />
<rect x="524" y="89" width="16" height="1" fill="#000" />
<rect x="539" y="73" width="1" height="17" fill="#000" />
<rect x="525" y="88" width="14" height="1" fill="#808080" />
<rect x="538" y="74" width="1" height="15" fill="#808080" />
<polygon points="527.5,79 535.5,79 531.5,83" fill="#000"/>
<text x="480.78" y="85.8" font-family="'Liberation Sans', sans-serif" font-size="12.5" font-weight="normal" fill="#000" textLength="30.24" lengthAdjust="spacingAndGlyphs" >AUTO</text>
<text x="485.19" y="107.7" font-family="'Liberation Sans', sans-serif" font-size="14" font-weight="normal" fill="#000" textLength="42.81" lengthAdjust="spacingAndGlyphs" >Source</text>
<rect x="477" y="111" width="65" height="21" fill="#fff" />
<rect x="477" y="111" width="65" height="1" fill="#808080" />
<rect x="477" y="111" width="1" height="21" fill="#808080" />
<rect x="478" y="112" width="63" height="1" fill="#000" />
<rect x="478" y="112" width="1" height="19" fill="#000" />
<rect x="477" y="131" width="65" height="1" fill="#fff" />
<rect x="541" y="111" width="1" height="21" fill="#fff" />
<rect x="478" y="130" width="63" height="1" fill="#c0c0c0" />
<rect x="540" y="112" width="1" height="19" fill="#c0c0c0" />
<rect x="524" y="113" width="16" height="17" fill="#c0c0c0" />
<rect x="524" y="113" width="16" height="1" fill="#c0c0c0" />
<rect x="524" y="113" width="1" height="17" fill="#c0c0c0" />
<rect x="525" y="114" width="14" height="1" fill="#fff" />
<rect x="525" y="114" width="1" height="15" fill="#fff" />
<rect x="524" y="129" width="16" height="1" fill="#000" />
<rect x="539" y="113" width="1" height="17" fill="#000" />
<rect x="525" y="128" width="14" height="1" fill="#808080" />
<rect x="538" y="114" width="1" height="15" fill="#808080" />
<polygon points="527.5,119 535.5,119 531.5,123" fill="#000"/>
<text x="480.99" y="125.4" font-family="'Liberation Sans', sans-serif" font-size="12.5" font-weight="normal" fill="#000" textLength="20.10" lengthAdjust="spacingAndGlyphs" >CH1</text>
<text x="493.01" y="145.5" font-family="'Liberation Sans', sans-serif" font-size="12.5" font-weight="normal" fill="#000" textLength="27.88" lengthAdjust="spacingAndGlyphs" >Slope</text>
<rect x="477" y="151" width="65" height="21" fill="#fff" />
<rect x="477" y="151" width="65" height="1" fill="#808080" />
<rect x="477" y="151" width="1" height="21" fill="#808080" />
<rect x="478" y="152" width="63" height="1" fill="#000" />
<rect x="478" y="152" width="1" height="19" fill="#000" />
<rect x="477" y="171" width="65" height="1" fill="#fff" />
<rect x="541" y="151" width="1" height="21" fill="#fff" />
<rect x="478" y="170" width="63" height="1" fill="#c0c0c0" />
<rect x="540" y="152" width="1" height="19" fill="#c0c0c0" />
<rect x="524" y="153" width="16" height="17" fill="#c0c0c0" />
<rect x="524" y="153" width="16" height="1" fill="#c0c0c0" />
<rect x="524" y="153" width="1" height="17" fill="#c0c0c0" />
<rect x="525" y="154" width="14" height="1" fill="#fff" />
<rect x="525" y="154" width="1" height="15" fill="#fff" />
<rect x="524" y="169" width="16" height="1" fill="#000" />
<rect x="539" y="153" width="1" height="17" fill="#000" />
<rect x="525" y="168" width="14" height="1" fill="#808080" />
<rect x="538" y="154" width="1" height="15" fill="#808080" />
<polygon points="527.5,159 535.5,159 531.5,163" fill="#000"/>
<text x="480.61" y="165.8" font-family="'Liberation Sans', sans-serif" font-size="12.5" font-weight="normal" fill="#000" textLength="38.18" lengthAdjust="spacingAndGlyphs" >Positive</text>
<text x="492.96" y="185.7" font-family="'Liberation Sans', sans-serif" font-size="12.5" font-weight="normal" fill="#000" textLength="33.51" lengthAdjust="spacingAndGlyphs" >Couple</text>
<rect x="477" y="191" width="65" height="21" fill="#fff" />
<rect x="477" y="191" width="65" height="1" fill="#808080" />
<rect x="477" y="191" width="1" height="21" fill="#808080" />
<rect x="478" y="192" width="63" height="1" fill="#000" />
<rect x="478" y="192" width="1" height="19" fill="#000" />
<rect x="477" y="211" width="65" height="1" fill="#fff" />
<rect x="541" y="191" width="1" height="21" fill="#fff" />
<rect x="478" y="210" width="63" height="1" fill="#c0c0c0" />
<rect x="540" y="192" width="1" height="19" fill="#c0c0c0" />
<rect x="524" y="193" width="16" height="17" fill="#c0c0c0" />
<rect x="524" y="193" width="16" height="1" fill="#c0c0c0" />
<rect x="524" y="193" width="1" height="17" fill="#c0c0c0" />
<rect x="525" y="194" width="14" height="1" fill="#fff" />
<rect x="525" y="194" width="1" height="15" fill="#fff" />
<rect x="524" y="209" width="16" height="1" fill="#000" />
<rect x="539" y="193" width="1" height="17" fill="#000" />
<rect x="525" y="208" width="14" height="1" fill="#808080" />
<rect x="538" y="194" width="1" height="15" fill="#808080" />
<polygon points="527.5,199 535.5,199 531.5,203" fill="#000"/>
<text x="480.98" y="205.4" font-family="'Liberation Sans', sans-serif" font-size="12.5" font-weight="normal" fill="#000" textLength="15.45" lengthAdjust="spacingAndGlyphs" >AC</text>
<rect x="477" y="215" width="65" height="17" fill="#c0c0c0" />
<rect x="477" y="215" width="65" height="1" fill="#fff" />
<rect x="477" y="215" width="1" height="17" fill="#fff" />
<rect x="477" y="231" width="65" height="1" fill="#000" />
<rect x="541" y="215" width="1" height="17" fill="#000" />
<rect x="478" y="230" width="63" height="1" fill="#808080" />
<rect x="540" y="216" width="1" height="15" fill="#808080" />
<text x="494.91" y="226.7" font-family="'Liberation Sans', sans-serif" font-size="12.5" font-weight="normal" fill="#000" textLength="29.36" lengthAdjust="spacingAndGlyphs" >STOP</text>
<rect x="477" y="239" width="65" height="17" fill="#c0c0c0" />
<rect x="477" y="239" width="65" height="1" fill="#fff" />
<rect x="477" y="239" width="1" height="17" fill="#fff" />
<rect x="477" y="255" width="65" height="1" fill="#000" />
<rect x="541" y="239" width="1" height="17" fill="#000" />
<rect x="478" y="254" width="63" height="1" fill="#808080" />
<rect x="540" y="240" width="1" height="15" fill="#808080" />
<text x="482.48" y="250.8" font-family="'Liberation Sans', sans-serif" font-size="12.5" font-weight="normal" fill="#000" textLength="53.06" lengthAdjust="spacingAndGlyphs" >AUTO SET</text>
<rect x="565" y="55" width="65" height="21" fill="#fff" />
<rect x="565" y="55" width="65" height="1" fill="#808080" />
<rect x="565" y="55" width="1" height="21" fill="#808080" />
<rect x="566" y="56" width="63" height="1" fill="#000" />
<rect x="566" y="56" width="1" height="19" fill="#000" />
<rect x="565" y="75" width="65" height="1" fill="#fff" />
<rect x="629" y="55" width="1" height="21" fill="#fff" />
<rect x="566" y="74" width="63" height="1" fill="#c0c0c0" />
<rect x="628" y="56" width="1" height="19" fill="#c0c0c0" />
<rect x="612" y="57" width="16" height="17" fill="#c0c0c0" />
<rect x="612" y="57" width="16" height="1" fill="#c0c0c0" />
<rect x="612" y="57" width="1" height="17" fill="#c0c0c0" />
<rect x="613" y="58" width="14" height="1" fill="#fff" />
<rect x="613" y="58" width="1" height="15" fill="#fff" />
<rect x="612" y="73" width="16" height="1" fill="#000" />
<rect x="627" y="57" width="1" height="17" fill="#000" />
<rect x="613" y="72" width="14" height="1" fill="#808080" />
<rect x="626" y="58" width="1" height="15" fill="#808080" />
<polygon points="616.5,64 624.5,64 620.5,68" fill="#fff"/>
<polygon points="615.5,63 623.5,63 619.5,67" fill="#808080"/>
<text x="569.50" y="70.0" font-family="'Liberation Sans', sans-serif" font-size="12.5" font-weight="normal" fill="#808080" textLength="26.98" lengthAdjust="spacingAndGlyphs" >0.2uS</text>
<circle cx="597.5" cy="111.5" r="28.6" fill="#c0c0c0" stroke="#000" stroke-width="1"/>
<circle cx="597.5" cy="111.5" r="25.8" fill="#dadada" stroke="#000" stroke-width="1"/>
<path d="M615.39,93.61 A25.3,25.3 0 0 1 579.61,129.39 Z" fill="#808080"/>
<line x1="584.5" y1="124.5" x2="572.2" y2="136.8" stroke="#000" stroke-width="1"/>
<line x1="610.5" y1="124.5" x2="622.8" y2="136.8" stroke="#000" stroke-width="1"/>
<circle cx="597.5" cy="111.2" r="20.2" fill="#0000ff"/>
<line x1="606.7" y1="110.9" x2="617" y2="113.2" stroke="#fff" stroke-width="2.3"/>
<rect x="565" y="167" width="65" height="21" fill="#fff" />
<rect x="565" y="167" width="65" height="1" fill="#808080" />
<rect x="565" y="167" width="1" height="21" fill="#808080" />
<rect x="566" y="168" width="63" height="1" fill="#000" />
<rect x="566" y="168" width="1" height="19" fill="#000" />
<rect x="565" y="187" width="65" height="1" fill="#fff" />
<rect x="629" y="167" width="1" height="21" fill="#fff" />
<rect x="566" y="186" width="63" height="1" fill="#c0c0c0" />
<rect x="628" y="168" width="1" height="19" fill="#c0c0c0" />
<rect x="612" y="169" width="16" height="17" fill="#c0c0c0" />
<rect x="612" y="169" width="16" height="1" fill="#c0c0c0" />
<rect x="612" y="169" width="1" height="17" fill="#c0c0c0" />
<rect x="613" y="170" width="14" height="1" fill="#fff" />
<rect x="613" y="170" width="1" height="15" fill="#fff" />
<rect x="612" y="185" width="16" height="1" fill="#000" />
<rect x="627" y="169" width="1" height="17" fill="#000" />
<rect x="613" y="184" width="14" height="1" fill="#808080" />
<rect x="626" y="170" width="1" height="15" fill="#808080" />
<polygon points="616.5,176 624.5,176 620.5,180" fill="#fff"/>
<polygon points="615.5,175 623.5,175 619.5,179" fill="#808080"/>
<text x="569.48" y="182.0" font-family="'Liberation Sans', sans-serif" font-size="12.5" font-weight="normal" fill="#808080" textLength="18.70" lengthAdjust="spacingAndGlyphs" >5uS</text>
<circle cx="597.5" cy="223.5" r="28.6" fill="#c0c0c0" stroke="#000" stroke-width="1"/>
<circle cx="597.5" cy="223.5" r="25.8" fill="#dadada" stroke="#000" stroke-width="1"/>
<path d="M615.39,205.61 A25.3,25.3 0 0 1 579.61,241.39 Z" fill="#808080"/>
<line x1="584.5" y1="236.5" x2="572.2" y2="248.8" stroke="#000" stroke-width="1"/>
<line x1="610.5" y1="236.5" x2="622.8" y2="248.8" stroke="#000" stroke-width="1"/>
<circle cx="597.5" cy="223.2" r="20.2" fill="#0000ff"/>
<line x1="606.4" y1="218.8" x2="615.8" y2="214.8" stroke="#fff" stroke-width="2.3"/>
<rect x="469" y="295" width="8" height="1" fill="#808080" />
<rect x="470" y="296" width="7" height="1" fill="#fff" />
<rect x="548" y="328" width="1" height="111" fill="#808080" />
<rect x="549" y="328" width="1" height="111" fill="#fff" />
<rect x="557" y="328" width="1" height="111" fill="#808080" />
<rect x="558" y="328" width="1" height="111" fill="#fff" />
<rect x="629" y="295" width="8" height="1" fill="#808080" />
<rect x="629" y="296" width="7" height="1" fill="#fff" />
<rect x="477" y="281" width="13" height="13" fill="#fff" />
<rect x="477" y="281" width="13" height="1" fill="#808080" />
<rect x="477" y="281" width="1" height="13" fill="#808080" />
<rect x="478" y="282" width="11" height="1" fill="#000" />
<rect x="478" y="282" width="1" height="11" fill="#000" />
<rect x="477" y="293" width="13" height="1" fill="#fff" />
<rect x="489" y="281" width="1" height="13" fill="#fff" />
<rect x="478" y="292" width="11" height="1" fill="#c0c0c0" />
<rect x="488" y="282" width="1" height="11" fill="#c0c0c0" />
<path d="M480,286.5 L482.5,289 L487,284.5" fill="none" stroke="#000" stroke-width="2.7" stroke-linecap="butt"/>
<text x="495.47" y="291.2" font-family="'Liberation Sans', sans-serif" font-size="12.5" font-weight="normal" fill="#000" textLength="24.75" lengthAdjust="spacingAndGlyphs" >CH.A</text>
<rect x="534" y="281" width="13" height="13" fill="#fff" />
<rect x="534" y="281" width="13" height="1" fill="#808080" />
<rect x="534" y="281" width="1" height="13" fill="#808080" />
<rect x="535" y="282" width="11" height="1" fill="#000" />
<rect x="535" y="282" width="1" height="11" fill="#000" />
<rect x="534" y="293" width="13" height="1" fill="#fff" />
<rect x="546" y="281" width="1" height="13" fill="#fff" />
<rect x="535" y="292" width="11" height="1" fill="#c0c0c0" />
<rect x="545" y="282" width="1" height="11" fill="#c0c0c0" />
<text x="551.18" y="291.2" font-family="'Liberation Sans', sans-serif" font-size="12.5" font-weight="normal" fill="#000" textLength="22.22" lengthAdjust="spacingAndGlyphs" >ADD</text>
<rect x="534" y="297" width="13" height="13" fill="#fff" />
<rect x="534" y="297" width="13" height="1" fill="#808080" />
<rect x="534" y="297" width="1" height="13" fill="#808080" />
<rect x="535" y="298" width="11" height="1" fill="#000" />
<rect x="535" y="298" width="1" height="11" fill="#000" />
<rect x="534" y="309" width="13" height="1" fill="#fff" />
<rect x="546" y="297" width="1" height="13" fill="#fff" />
<rect x="535" y="308" width="11" height="1" fill="#c0c0c0" />
<rect x="545" y="298" width="1" height="11" fill="#c0c0c0" />
<text x="550.72" y="306.7" font-family="'Liberation Sans', sans-serif" font-size="12.5" font-weight="normal" fill="#000" textLength="21.95" lengthAdjust="spacingAndGlyphs" >SUB</text>
<rect x="534" y="313" width="13" height="13" fill="#fff" />
<rect x="534" y="313" width="13" height="1" fill="#808080" />
<rect x="534" y="313" width="1" height="13" fill="#808080" />
<rect x="535" y="314" width="11" height="1" fill="#000" />
<rect x="535" y="314" width="1" height="11" fill="#000" />
<rect x="534" y="325" width="13" height="1" fill="#fff" />
<rect x="546" y="313" width="1" height="13" fill="#fff" />
<rect x="535" y="324" width="11" height="1" fill="#c0c0c0" />
<rect x="545" y="314" width="1" height="11" fill="#c0c0c0" />
<text x="550.57" y="322.7" font-family="'Liberation Sans', sans-serif" font-size="12.5" font-weight="normal" fill="#000" textLength="17.36" lengthAdjust="spacingAndGlyphs" >X-Y</text>
<rect x="582" y="281" width="13" height="13" fill="#fff" />
<rect x="582" y="281" width="13" height="1" fill="#808080" />
<rect x="582" y="281" width="1" height="13" fill="#808080" />
<rect x="583" y="282" width="11" height="1" fill="#000" />
<rect x="583" y="282" width="1" height="11" fill="#000" />
<rect x="582" y="293" width="13" height="1" fill="#fff" />
<rect x="594" y="281" width="1" height="13" fill="#fff" />
<rect x="583" y="292" width="11" height="1" fill="#c0c0c0" />
<rect x="593" y="282" width="1" height="11" fill="#c0c0c0" />
<text x="599.08" y="291.2" font-family="'Liberation Sans', sans-serif" font-size="12.5" font-weight="normal" fill="#000" textLength="24.36" lengthAdjust="spacingAndGlyphs" >CH.B</text>
<circle cx="500" cy="301.3" r="5.2" fill="#fff"/>
<path d="M496.04,305.26 A5.6,5.6 0 0 1 503.96,297.34" fill="none" stroke="#808080" stroke-width="1"/>
<path d="M496.68,304.62 A4.7,4.7 0 0 1 503.32,297.98" fill="none" stroke="#000" stroke-width="1.1"/>
<path d="M496.04,305.26 A5.6,5.6 0 0 0 503.96,297.34" fill="none" stroke="#fff" stroke-width="1"/>
<text x="510.58" y="306.1" font-family="'Liberation Sans', sans-serif" font-size="12.5" font-weight="normal" fill="#000" textLength="16.25" lengthAdjust="spacingAndGlyphs" >DC</text>
<circle cx="500" cy="317" r="5.2" fill="#fff"/>
<path d="M496.04,320.96 A5.6,5.6 0 0 1 503.96,313.04" fill="none" stroke="#808080" stroke-width="1"/>
<path d="M496.68,320.32 A4.7,4.7 0 0 1 503.32,313.68" fill="none" stroke="#000" stroke-width="1.1"/>
<path d="M496.04,320.96 A5.6,5.6 0 0 0 503.96,313.04" fill="none" stroke="#fff" stroke-width="1"/>
<circle cx="500" cy="317" r="2" fill="#000"/>
<text x="511.48" y="321.8" font-family="'Liberation Sans', sans-serif" font-size="12.5" font-weight="normal" fill="#000" textLength="14.31" lengthAdjust="spacingAndGlyphs" >AC</text>
<circle cx="500" cy="332.7" r="5.2" fill="#fff"/>
<path d="M496.04,336.66 A5.6,5.6 0 0 1 503.96,328.74" fill="none" stroke="#808080" stroke-width="1"/>
<path d="M496.68,336.02 A4.7,4.7 0 0 1 503.32,329.38" fill="none" stroke="#000" stroke-width="1.1"/>
<path d="M496.04,336.66 A5.6,5.6 0 0 0 503.96,328.74" fill="none" stroke="#fff" stroke-width="1"/>
<text x="510.96" y="337.5" font-family="'Liberation Sans', sans-serif" font-size="12.5" font-weight="normal" fill="#000" textLength="24.06" lengthAdjust="spacingAndGlyphs" >GND</text>
<circle cx="588" cy="303.3" r="5.2" fill="#fff"/>
<path d="M584.04,307.26 A5.6,5.6 0 0 1 591.96,299.34" fill="none" stroke="#808080" stroke-width="1"/>
<path d="M584.68,306.62 A4.7,4.7 0 0 1 591.32,299.98" fill="none" stroke="#000" stroke-width="1.1"/>
<path d="M584.04,307.26 A5.6,5.6 0 0 0 591.96,299.34" fill="none" stroke="#fff" stroke-width="1"/>
<text x="598.70" y="306.8" font-family="'Liberation Sans', sans-serif" font-size="12.5" font-weight="normal" fill="#000" textLength="15.92" lengthAdjust="spacingAndGlyphs" >DC</text>
<circle cx="588" cy="318.9" r="5.2" fill="#fff"/>
<path d="M584.04,322.86 A5.6,5.6 0 0 1 591.96,314.94" fill="none" stroke="#808080" stroke-width="1"/>
<path d="M584.68,322.22 A4.7,4.7 0 0 1 591.32,315.58" fill="none" stroke="#000" stroke-width="1.1"/>
<path d="M584.04,322.86 A5.6,5.6 0 0 0 591.96,314.94" fill="none" stroke="#fff" stroke-width="1"/>
<circle cx="588" cy="318.9" r="2" fill="#000"/>
<text x="599.58" y="322.4" font-family="'Liberation Sans', sans-serif" font-size="12.5" font-weight="normal" fill="#000" textLength="14.31" lengthAdjust="spacingAndGlyphs" >AC</text>
<circle cx="588" cy="334.7" r="5.2" fill="#fff"/>
<path d="M584.04,338.66 A5.6,5.6 0 0 1 591.96,330.74" fill="none" stroke="#808080" stroke-width="1"/>
<path d="M584.68,338.02 A4.7,4.7 0 0 1 591.32,331.38" fill="none" stroke="#000" stroke-width="1.1"/>
<path d="M584.04,338.66 A5.6,5.6 0 0 0 591.96,330.74" fill="none" stroke="#fff" stroke-width="1"/>
<text x="599.06" y="338.2" font-family="'Liberation Sans', sans-serif" font-size="12.5" font-weight="normal" fill="#000" textLength="23.75" lengthAdjust="spacingAndGlyphs" >GND</text>
<rect x="477" y="343" width="65" height="21" fill="#fff" />
<rect x="477" y="343" width="65" height="1" fill="#808080" />
<rect x="477" y="343" width="1" height="21" fill="#808080" />
<rect x="478" y="344" width="63" height="1" fill="#000" />
<rect x="478" y="344" width="1" height="19" fill="#000" />
<rect x="477" y="363" width="65" height="1" fill="#fff" />
<rect x="541" y="343" width="1" height="21" fill="#fff" />
<rect x="478" y="362" width="63" height="1" fill="#c0c0c0" />
<rect x="540" y="344" width="1" height="19" fill="#c0c0c0" />
<rect x="524" y="345" width="16" height="17" fill="#c0c0c0" />
<rect x="524" y="345" width="16" height="1" fill="#c0c0c0" />
<rect x="524" y="345" width="1" height="17" fill="#c0c0c0" />
<rect x="525" y="346" width="14" height="1" fill="#fff" />
<rect x="525" y="346" width="1" height="15" fill="#fff" />
<rect x="524" y="361" width="16" height="1" fill="#000" />
<rect x="539" y="345" width="1" height="17" fill="#000" />
<rect x="525" y="360" width="14" height="1" fill="#808080" />
<rect x="538" y="346" width="1" height="15" fill="#808080" />
<polygon points="528.5,352 536.5,352 532.5,356" fill="#fff"/>
<polygon points="527.5,351 535.5,351 531.5,355" fill="#808080"/>
<text x="481.31" y="358.0" font-family="'Liberation Sans', sans-serif" font-size="12.5" font-weight="normal" fill="#808080" textLength="26.93" lengthAdjust="spacingAndGlyphs" >10mV</text>
<rect x="565" y="343" width="65" height="21" fill="#fff" />
<rect x="565" y="343" width="65" height="1" fill="#808080" />
<rect x="565" y="343" width="1" height="21" fill="#808080" />
<rect x="566" y="344" width="63" height="1" fill="#000" />
<rect x="566" y="344" width="1" height="19" fill="#000" />
<rect x="565" y="363" width="65" height="1" fill="#fff" />
<rect x="629" y="343" width="1" height="21" fill="#fff" />
<rect x="566" y="362" width="63" height="1" fill="#c0c0c0" />
<rect x="628" y="344" width="1" height="19" fill="#c0c0c0" />
<rect x="612" y="345" width="16" height="17" fill="#c0c0c0" />
<rect x="612" y="345" width="16" height="1" fill="#c0c0c0" />
<rect x="612" y="345" width="1" height="17" fill="#c0c0c0" />
<rect x="613" y="346" width="14" height="1" fill="#fff" />
<rect x="613" y="346" width="1" height="15" fill="#fff" />
<rect x="612" y="361" width="16" height="1" fill="#000" />
<rect x="627" y="345" width="1" height="17" fill="#000" />
<rect x="613" y="360" width="14" height="1" fill="#808080" />
<rect x="626" y="346" width="1" height="15" fill="#808080" />
<polygon points="616.5,352 624.5,352 620.5,356" fill="#fff"/>
<polygon points="615.5,351 623.5,351 619.5,355" fill="#808080"/>
<text x="569.08" y="357.9" font-family="'Liberation Sans', sans-serif" font-size="12.5" font-weight="normal" fill="#808080" textLength="12.87" lengthAdjust="spacingAndGlyphs" >5V</text>
<circle cx="509.5" cy="399.5" r="28.6" fill="#c0c0c0" stroke="#000" stroke-width="1"/>
<circle cx="509.5" cy="399.5" r="25.8" fill="#dadada" stroke="#000" stroke-width="1"/>
<path d="M527.39,381.61 A25.3,25.3 0 0 1 491.61,417.39 Z" fill="#808080"/>
<line x1="496.5" y1="412.5" x2="484.2" y2="424.8" stroke="#000" stroke-width="1"/>
<line x1="522.5" y1="412.5" x2="534.8" y2="424.8" stroke="#000" stroke-width="1"/>
<circle cx="509.5" cy="399.2" r="20.2" fill="#0000ff"/>
<line x1="515.6" y1="407" x2="523.8" y2="413.2" stroke="#fff" stroke-width="2.3"/>
<circle cx="597.5" cy="399.5" r="28.6" fill="#c0c0c0" stroke="#000" stroke-width="1"/>
<circle cx="597.5" cy="399.5" r="25.8" fill="#dadada" stroke="#000" stroke-width="1"/>
<path d="M615.39,381.61 A25.3,25.3 0 0 1 579.61,417.39 Z" fill="#808080"/>
<line x1="584.5" y1="412.5" x2="572.2" y2="424.8" stroke="#000" stroke-width="1"/>
<line x1="610.5" y1="412.5" x2="622.8" y2="424.8" stroke="#000" stroke-width="1"/>
<circle cx="597.5" cy="399.2" r="20.2" fill="#0000ff"/>
<line x1="581.6" y1="412.5" x2="590.1" y2="407" stroke="#fff" stroke-width="2.3"/></svg></body></html>
